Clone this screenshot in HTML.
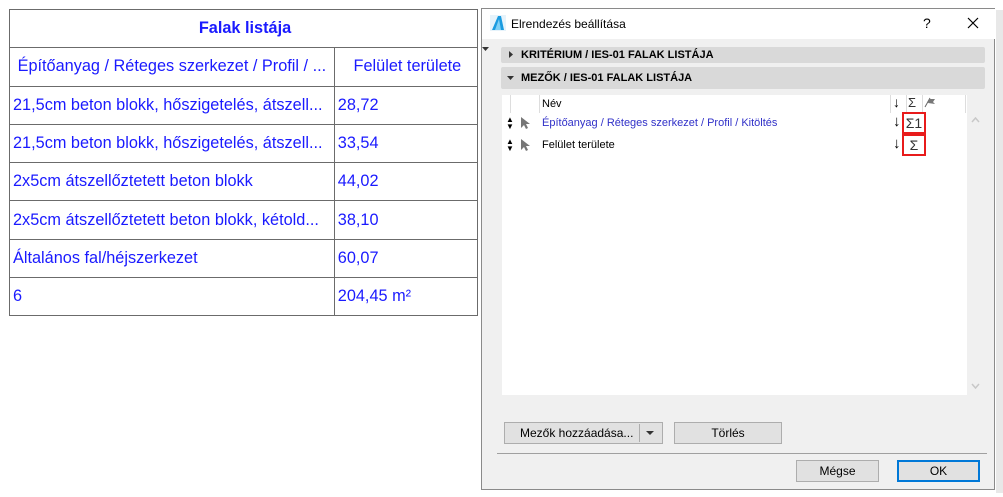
<!DOCTYPE html>
<html><head><meta charset="utf-8"><style>
body{margin:0;width:1003px;height:497px;background:#fff;position:relative;overflow:hidden;font-family:"Liberation Sans",sans-serif}
.a{position:absolute}
table{position:absolute;left:9px;top:9px;border-collapse:collapse;color:#1a1aff;font-size:16.3px}
td{border:1px solid #6b6b6b;padding:0 0 0 3px;white-space:nowrap}
tr{height:38.3px}
.dl{font-size:11px;color:#000}
.btn{position:absolute;background:#e1e1e1;border:1px solid #adadad;font-size:12px;text-align:center;line-height:20px;box-sizing:border-box}
</style></head><body>
<table>
<tr><td colspan="2" style="text-align:center;font-weight:bold;width:464px">Falak listája</td></tr>
<tr><td style="width:321px;text-align:center;padding:0">Építőanyag / Réteges szerkezet / Profil / ...</td><td style="width:138px;text-align:center">Felület területe</td></tr>
<tr><td>21,5cm beton blokk, hőszigetelés, átszell...</td><td>28,72</td></tr>
<tr><td>21,5cm beton blokk, hőszigetelés, átszell...</td><td>33,54</td></tr>
<tr><td>2x5cm átszellőztetett beton blokk</td><td>44,02</td></tr>
<tr><td>2x5cm átszellőztetett beton blokk, kétold...</td><td>38,10</td></tr>
<tr><td>Általános fal/héjszerkezet</td><td>60,07</td></tr>
<tr><td>6</td><td>204,45 m²</td></tr>
</table>
<div class="a" style="left:996px;top:10px;width:7px;height:483px;background:#e8e8e8"></div>
<div class="a" style="left:481px;top:8px;width:514px;height:482px;border:1px solid #8a8a8a;background:#f0f0f0;box-sizing:border-box"></div>
<div class="a" style="left:482px;top:9px;width:513px;height:30px;background:#fff"></div>
<svg class="a" style="left:490px;top:15px" width="16" height="16"><rect width="16" height="16" fill="#e6f3fb"/><path d="M2 15 L8 1 L11 1 L14 15 Z" fill="#1a9be0"/><path d="M5 15 L9 4 L11 15Z" fill="#7fd0f5"/></svg>
<div class="a dl" style="left:511px;top:17px;font-size:12px">Elrendezés beállítása</div>
<div class="a" style="left:923px;top:15px;font-size:14px">?</div>
<svg class="a" style="left:967px;top:17px" width="12" height="12"><path d="M1 1L11 11M11 1L1 11" stroke="#000" stroke-width="1.2"/></svg>
<svg class="a" style="left:482px;top:47px" width="8" height="5"><path d="M0 0H7L3.5 4Z" fill="#333"/></svg>
<div class="a" style="left:501px;top:47px;width:484px;height:16px;background:#d9d9d9;border-radius:2px"></div>
<svg class="a" style="left:509px;top:51px" width="5" height="8"><path d="M0 0V7L4 3.5Z" fill="#333"/></svg>
<div class="a dl" style="left:521px;top:47px;line-height:16px;font-weight:bold">KRITÉRIUM / IES-01 FALAK LISTÁJA</div>
<div class="a" style="left:501px;top:67px;width:484px;height:22px;background:#d9d9d9;border-radius:2px"></div>
<svg class="a" style="left:507px;top:76px" width="8" height="5"><path d="M0 0H7L3.5 4Z" fill="#333"/></svg>
<div class="a dl" style="left:521px;top:67px;line-height:22px;font-weight:bold">MEZŐK / IES-01 FALAK LISTÁJA</div>
<div class="a" style="left:502px;top:95px;width:465px;height:300px;background:#fff"></div>
<div class="a" style="left:967px;top:112px;width:18px;height:283px;background:#f0f0f0"></div>
<div class="a" style="left:510px;top:95px;width:1px;height:18px;background:#ddd"></div>
<div class="a" style="left:539px;top:95px;width:1px;height:18px;background:#ddd"></div>
<div class="a" style="left:890px;top:95px;width:1px;height:18px;background:#ddd"></div>
<div class="a" style="left:906px;top:95px;width:1px;height:18px;background:#ddd"></div>
<div class="a" style="left:922px;top:95px;width:1px;height:18px;background:#ddd"></div>
<div class="a" style="left:965px;top:95px;width:1px;height:18px;background:#ddd"></div>
<div class="a dl" style="left:542px;top:98px">Név</div>
<div class="a" style="left:893px;top:94px;font-size:14px">↓</div>
<div class="a" style="left:908px;top:95px;font-size:13px;color:#333">Σ</div>
<svg class="a" style="left:924px;top:97px" width="12" height="11"><path d="M1 10L6 1" stroke="#666"/><path d="M5 2L11 2L9 5L11 7L4 6Z" fill="#777"/></svg>
<svg class="a" style="left:971px;top:117px" width="9" height="6"><path d="M1 5L4.5 1L8 5" stroke="#c8c8c8" fill="none" stroke-width="1.5"/></svg>
<svg class="a" style="left:971px;top:383px" width="9" height="6"><path d="M1 1L4.5 5L8 1" stroke="#c8c8c8" fill="none" stroke-width="1.5"/></svg>
<div class="a" style="left:506px;top:116px;font-size:8px;line-height:7px">▲<br>▼</div>
<div class="a" style="left:506px;top:138px;font-size:8px;line-height:7px">▲<br>▼</div>
<svg class="a" style="left:520px;top:116px" width="10" height="13"><path d="M1 1V12L4 9L6 13L8 12L6 8H10Z" fill="#777"/></svg>
<svg class="a" style="left:520px;top:138px" width="10" height="13"><path d="M1 1V12L4 9L6 13L8 12L6 8H10Z" fill="#777"/></svg>
<div class="a dl" style="left:542px;top:117px;color:#3030c8">Építőanyag / Réteges szerkezet / Profil / Kitöltés</div>
<div class="a dl" style="left:542px;top:139px">Felület területe</div>
<div class="a" style="left:893px;top:113px;font-size:15px">↓</div>
<div class="a" style="left:893px;top:135px;font-size:15px">↓</div>
<div class="a" style="left:902px;top:112px;width:24px;height:22px;border:2px solid #e81b1b;box-sizing:border-box;font-size:14px;text-align:center;line-height:19px;color:#333">Σ1</div>
<div class="a" style="left:902px;top:134px;width:24px;height:22px;border:2px solid #e81b1b;box-sizing:border-box;font-size:14px;text-align:center;line-height:19px;color:#333">Σ</div>
<div class="btn" style="left:504px;top:422px;width:159px;height:22px;text-align:left;padding-left:15px">Mezők hozzáadása...</div>
<div class="a" style="left:639px;top:424px;width:1px;height:18px;background:#adadad"></div>
<svg class="a" style="left:646px;top:431px" width="9" height="5"><path d="M0 0H8L4 4Z" fill="#333"/></svg>
<div class="btn" style="left:674px;top:422px;width:108px;height:22px">Törlés</div>
<div class="a" style="left:497px;top:453px;width:490px;height:1px;background:#a0a0a0"></div>
<div class="btn" style="left:796px;top:460px;width:83px;height:22px">Mégse</div>
<div class="btn" style="left:897px;top:460px;width:83px;height:22px;border:2px solid #0078d7;line-height:18px">OK</div>
</body></html>
